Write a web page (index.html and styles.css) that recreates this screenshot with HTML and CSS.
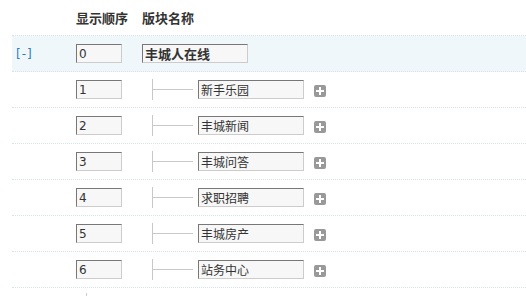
FILE: index.html
```html
<!DOCTYPE html>
<html lang="zh-CN">
<head>
    <meta charset="UTF-8">
    <title>版块管理</title>
    <link rel="stylesheet" href="styles.css">
</head>
<body>
    <div class="forum-list">
        <!-- header -->
        <div class="row head">
            <div class="col-toggle"></div>
            <div class="col-order">显示顺序</div>
            <div class="col-name">版块名称</div>
        </div>

        <!-- group -->
        <div class="row group">
            <div class="col-toggle"><a href="#" class="toggle">[-]</a></div>
            <div class="col-order"><input type="text" class="order-input" value="0"></div>
            <div class="col-name"><input type="text" class="name-input bold" value="丰城人在线"></div>
        </div>

        <div class="row">
            <div class="col-toggle"></div>
            <div class="col-order"><input type="text" class="order-input" value="1"></div>
            <div class="col-name">
                <span class="tree"></span>
                <input type="text" class="name-input" value="新手乐园">
                <a href="#" class="add-btn"><svg width="12" height="12" viewBox="0 0 12 12"><rect width="12" height="12" rx="2" fill="#999"/><path d="M5 2h2v3h3v2H7v3H5V7H2V5h3z" fill="#fff"/></svg></a>
            </div>
        </div>

        <div class="row">
            <div class="col-toggle"></div>
            <div class="col-order"><input type="text" class="order-input" value="2"></div>
            <div class="col-name">
                <span class="tree"></span>
                <input type="text" class="name-input" value="丰城新闻">
                <a href="#" class="add-btn"><svg width="12" height="12" viewBox="0 0 12 12"><rect width="12" height="12" rx="2" fill="#999"/><path d="M5 2h2v3h3v2H7v3H5V7H2V5h3z" fill="#fff"/></svg></a>
            </div>
        </div>

        <div class="row">
            <div class="col-toggle"></div>
            <div class="col-order"><input type="text" class="order-input" value="3"></div>
            <div class="col-name">
                <span class="tree"></span>
                <input type="text" class="name-input" value="丰城问答">
                <a href="#" class="add-btn"><svg width="12" height="12" viewBox="0 0 12 12"><rect width="12" height="12" rx="2" fill="#999"/><path d="M5 2h2v3h3v2H7v3H5V7H2V5h3z" fill="#fff"/></svg></a>
            </div>
        </div>

        <div class="row">
            <div class="col-toggle"></div>
            <div class="col-order"><input type="text" class="order-input" value="4"></div>
            <div class="col-name">
                <span class="tree"></span>
                <input type="text" class="name-input" value="求职招聘">
                <a href="#" class="add-btn"><svg width="12" height="12" viewBox="0 0 12 12"><rect width="12" height="12" rx="2" fill="#999"/><path d="M5 2h2v3h3v2H7v3H5V7H2V5h3z" fill="#fff"/></svg></a>
            </div>
        </div>

        <div class="row">
            <div class="col-toggle"></div>
            <div class="col-order"><input type="text" class="order-input" value="5"></div>
            <div class="col-name">
                <span class="tree"></span>
                <input type="text" class="name-input" value="丰城房产">
                <a href="#" class="add-btn"><svg width="12" height="12" viewBox="0 0 12 12"><rect width="12" height="12" rx="2" fill="#999"/><path d="M5 2h2v3h3v2H7v3H5V7H2V5h3z" fill="#fff"/></svg></a>
            </div>
        </div>

        <div class="row">
            <div class="col-toggle"></div>
            <div class="col-order"><input type="text" class="order-input" value="6"></div>
            <div class="col-name">
                <span class="tree"></span>
                <input type="text" class="name-input" value="站务中心">
                <a href="#" class="add-btn"><svg width="12" height="12" viewBox="0 0 12 12"><rect width="12" height="12" rx="2" fill="#999"/><path d="M5 2h2v3h3v2H7v3H5V7H2V5h3z" fill="#fff"/></svg></a>
            </div>
        </div>

        <!-- add new forum row (cut off) -->
        <div class="row last">
            <div class="col-toggle"></div>
            <div class="col-order"><span class="last-line"></span></div>
        </div>
    </div>
</body>
</html>
```

FILE: styles.css
```css
body {
    margin: 0;
    background-color: #fff;
    color: #333;
    font-family: Tahoma, "DejaVu Sans", "Noto Sans CJK SC", sans-serif;
    font-size: 12px;
}

.forum-list {
    margin-left: 12px;
}

.row {
    display: flex;
    align-items: center;
    height: 35px;
    border-bottom: 1px dotted #d3e4ef;
}

.row.head {
    font-family: "Noto Sans CJK SC", sans-serif;
    font-weight: bold;
    font-size: 13px;
    color: #333;
}

.row.group {
    background-color: #f0f7fa;
}

.row.last {
    border-bottom: none;
    align-items: flex-start;
}

.col-toggle {
    width: 64px;
}

.col-order {
    width: 66px;
}

.col-name {
    display: flex;
    align-items: center;
}

.toggle {
    margin-left: 4px;
    color: #2b7dbc;
    text-decoration: none;
    font-size: 12px;
    letter-spacing: 1px;
}

input[type="text"] {
    box-sizing: border-box;
    height: 19px;
    margin: 0;
    padding: 0 2px;
    background-color: #f7f7f7;
    border: 1px solid;
    border-color: #777 #ccc #ccc #777;
    color: #333;
    font-size: 12px;
    font-family: Tahoma, "DejaVu Sans", "Noto Sans CJK SC", sans-serif;
    outline: none;
}

.order-input {
    width: 46px;
    padding-left: 3px;
}

/* text sits high in the name boxes */
.name-input {
    width: 106px;
    height: 20px;
    padding: 0 2px 4px 2px;
    font-family: "Noto Sans CJK SC", sans-serif;
}

.name-input.bold {
    font-weight: bold;
    font-size: 13px;
}

/* tree connector */
.tree {
    display: inline-block;
    width: 40px;
    height: 21px;
    margin-left: 10px;
    margin-right: 5px;
    border-left: 1px solid #c8c8c8;
    background: linear-gradient(#c8c8c8, #c8c8c8) no-repeat 0 10px / 100% 1px;
}

.add-btn {
    display: inline-block;
    margin-left: 10px;
    margin-top: 3px;
    line-height: 0;
}

.last-line {
    display: block;
    width: 1px;
    height: 10px;
    margin-top: 5px;
    margin-left: 10px;
    background-color: #ccc;
}
```
